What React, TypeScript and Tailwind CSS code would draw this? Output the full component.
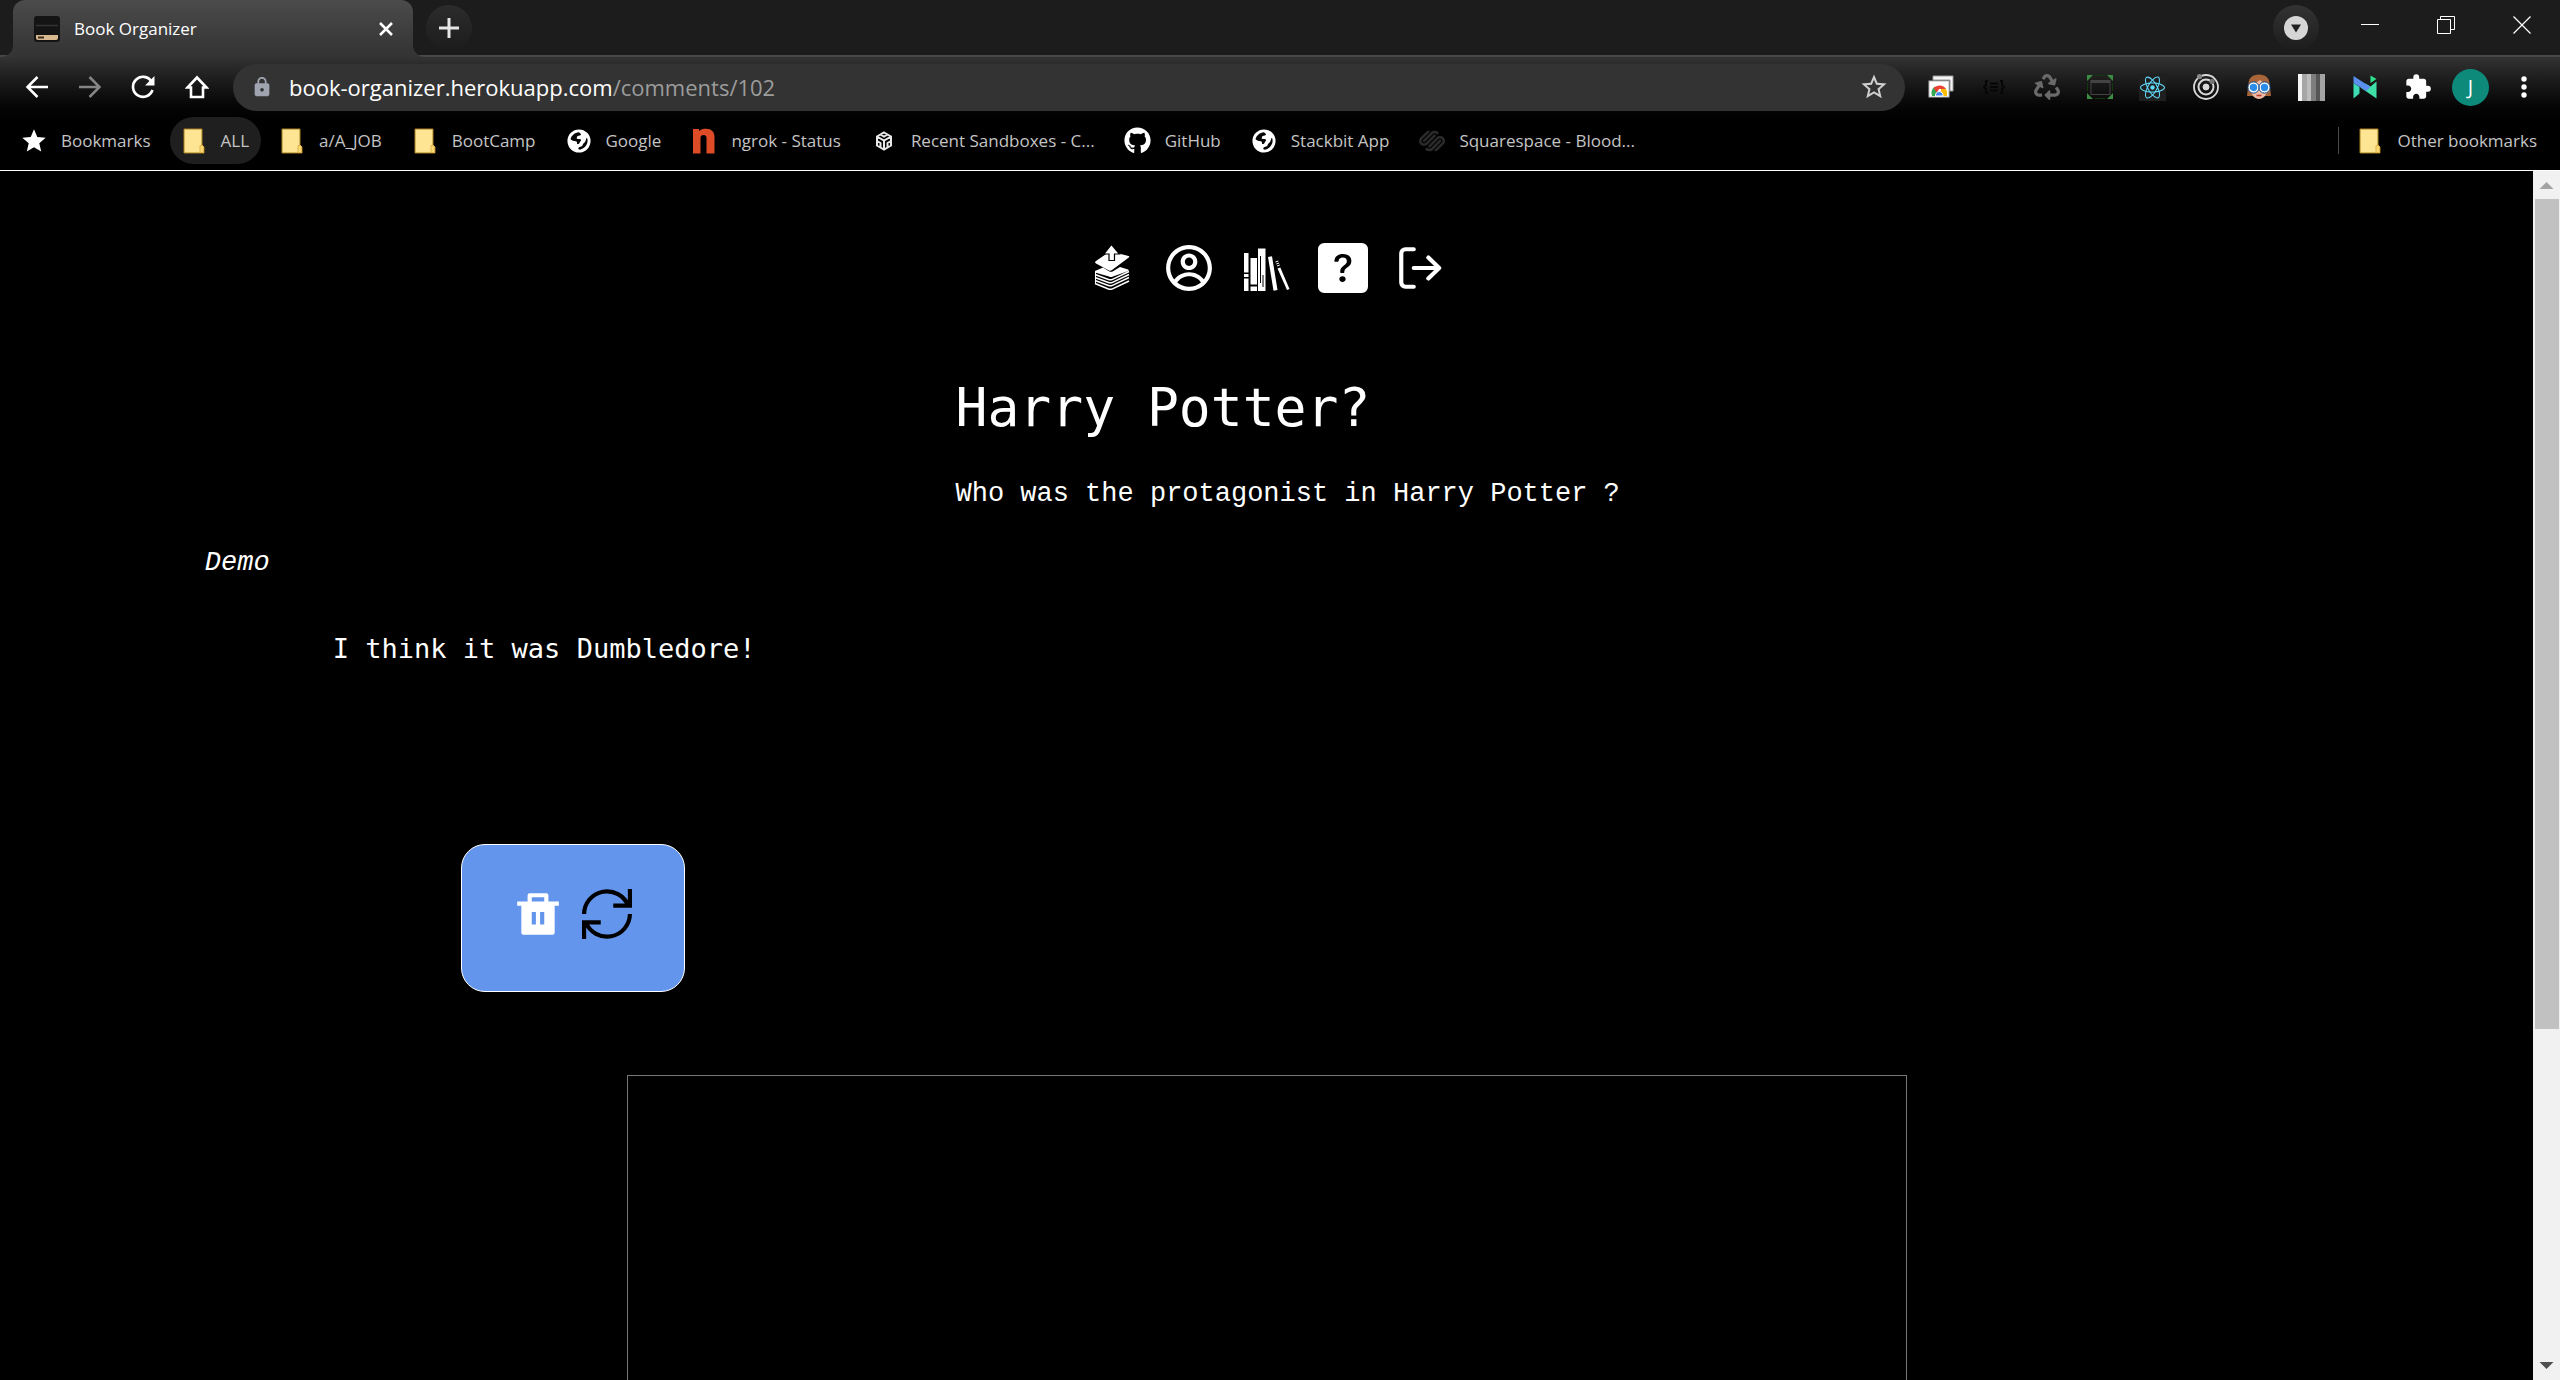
import type { ReactNode } from "react";
import { BsQuestionSquareFill } from "react-icons/bs";
import { CgProfile } from "react-icons/cg";
import { FaGithub, FaReact, FaRecycle } from "react-icons/fa";
import { MdExtension, MdLock, MdStar, MdStarBorder } from "react-icons/md";
import { SiSquarespace } from "react-icons/si";

/* ---------- browser icons ---------- */

const Folder = () => (
  <svg width="22" height="26" viewBox="0 0 22 26">
    <path d="M1 1h18v16l2 2v6H1z" fill="#fde594" stroke="#a87f22" strokeWidth="1" />
    <path d="M17 17.500h2.500l1 1.500v5.500H17z" fill="#fbd873" stroke="#e0b44b" strokeWidth="1" />
  </svg>
);

const Globe = () => (
  <svg width="26" height="26" viewBox="0 0 26 26">
    <circle cx="13" cy="13" r="12.500" fill="#fff" />
    <path
      d="M13 3.500c-4.500.3-8.200 3.400-9.200 7.700 1.600 1.300 3.200 2 5.600 2.200 1.400.1 1.500 1.200 1.500 2.800 1.600.3 2.700-.2 3-1.800.3-1.300 1.500-1.200 1.300-2.500-.3-1.500-2.700-1-4.600-1.400 0-2 .4-3.200 2.200-3.300 1.600-.1 2.400-.6 2.300-1.900zM21.600 9.500c.9 1.500 1 4.400.2 6.300-1.300 3.500-4.300 6-7.800 6.600-2.200-.3-2.300-1.800-.9-2.600 1.500-.8 3.700-.8 4-2.700.3-1.700 1.800-2 2.600-3.300.7-1.200.7-3.300 1.900-4.300z"
      fill="#060606"
    />
  </svg>
);

const Ngrok = () => (
  <svg width="24" height="26" viewBox="0 0 24 26">
    <path d="M1 1h6v2c2-1.800 4-2.300 7-2.300 5.500 0 8.500 3 8.500 8.300v16.500h-8V10c0-2-1-3-3-3s-3 1-3 3v15.500H1z" fill="#dd4b27" />
  </svg>
);

const Sandbox = () => (
  <svg width="18" height="20" viewBox="0 0 18 20" fill="none" stroke="#e8e8e8" strokeWidth="2">
    <path d="M9 1.500l7 4v9l-7 4-7-4v-9zM2 5.500l7 4 7-4M9 9.500v9M5.500 3.500L9 5.500l3.500-2M2 10l3.500 2v4M16 10l-3.500 2v4" />
  </svg>
);

const Back = () => (
  <svg width="24" height="24" viewBox="0 0 24 24" fill="none" stroke="currentColor" strokeWidth="2.500">
    <path d="M23 12H3M12.500 2L2.500 12l10 10" />
  </svg>
);

const Forward = () => (
  <svg width="24" height="24" viewBox="0 0 24 24" fill="none" stroke="currentColor" strokeWidth="2.500">
    <path d="M1 12h20M11.500 2l10 10-10 10" />
  </svg>
);

const Reload = () => (
  <svg width="24" height="24" viewBox="0 0 24 24" fill="none" stroke="currentColor" strokeWidth="2.600">
    <path d="M20.500 6.500A10 10 0 1 0 21.500 15" />
    <path d="M23.500 1v9.500H14z" fill="currentColor" stroke="none" />
  </svg>
);

const Home = () => (
  <svg width="24" height="24" viewBox="0 0 24 24" fill="none" stroke="currentColor" strokeWidth="2.600">
    <path d="M12 2.500L2.500 12.500H6v9.500h12v-9.500h3.500z" />
  </svg>
);

const PageStack = () => (
  <svg width="26" height="24" viewBox="0 0 26 24">
    <path d="M5 1h20v15h-3V5H5z" fill="#f4f4f4" stroke="#9a9a9a" />
    <rect x="1" y="6" width="20" height="16" fill="#fff" stroke="#b5b5b5" />
    <path d="M4 21a7.500 7.500 0 0 1 3-9.500l3 6V21z" fill="#34a853" />
    <path d="M5.500 13A8 8 0 0 1 18 14h-7l-2 4z" fill="#ea4335" />
    <path d="M18 14a8 8 0 0 1 1 7h-6v-7z" fill="#fbbc05" />
    <path d="M7.500 21a3.800 3.800 0 1 1 7.500 0z" fill="#4285f4" stroke="#fff" />
  </svg>
);

const JsonBraces = () => (
  <svg width="22" height="16" viewBox="0 0 22 16" fill="none" stroke="#060606" strokeWidth="2">
    <path d="M5 2H3v4L1 8l2 2v4h2M17 2h2v4l2 2-2 2v4h-2M7 4.500h8M7 8h8M7 11.500h8" />
  </svg>
);

const Screenshot = () => (
  <svg width="28" height="26" viewBox="0 0 28 26">
    <path d="M1 1h6L1 7zM27 1v6l-6-6zM1 25v-6l6 6zM27 25h-6l6-6z" fill="#3d8b40" />
    <path d="M9 1.500h10M9 24.500h10M1.500 9v8M26.500 9v8" stroke="#12380f" strokeWidth="1" />
    <rect x="5" y="6.500" width="19" height="14" fill="none" stroke="#444" strokeWidth="1" />
    <path d="M5 8h19" stroke="#444" strokeWidth="2" />
  </svg>
);

const Orbit = () => (
  <svg width="28" height="28" viewBox="0 0 28 28" fill="none" stroke="#d9d9d9">
    <circle cx="14" cy="14" r="12" strokeWidth="1.800" />
    <circle cx="14" cy="14" r="7.500" strokeWidth="2" />
    <circle cx="14" cy="14" r="3" fill="#d9d9d9" />
    <circle cx="7.500" cy="3.500" r="2.600" fill="#888" stroke="none" />
    <circle cx="20" cy="8.500" r="2.600" fill="#777" stroke="none" />
  </svg>
);

const Face = () => (
  <svg width="26" height="26" viewBox="0 0 26 26">
    <path d="M13 .5C6.500.5 3 4 2.500 9L1 22h7l5-3 5 3h7L23.500 9C23 4 19.500.5 13 .5z" fill="#a9653a" />
    <path d="M5 10c4-1 7-2 9-4 2 2 5 3 7 4v6c0 5-4 9-8 9s-8-4-8-9z" fill="#f2b9a2" />
    <circle cx="7.500" cy="13.500" r="4.600" fill="#2a8be8" stroke="#fff" strokeWidth="1.800" />
    <circle cx="18.500" cy="13.500" r="4.600" fill="#2a8be8" stroke="#fff" strokeWidth="1.800" />
    <circle cx="7.500" cy="13.500" r="5.600" fill="none" stroke="#164c8c" />
    <circle cx="18.500" cy="13.500" r="5.600" fill="none" stroke="#164c8c" />
    <path d="M10.500 21.500h5" stroke="#b23a3a" strokeWidth="1.600" />
  </svg>
);

const Stripes = () => (
  <svg width="27" height="27" viewBox="0 0 27 27">
    <path fill="#f5f5f5" d="M0 0h4v27H0z" />
    <path fill="#a6a6a6" d="M4 0h5v27H4z" />
    <path fill="#bdbdbd" d="M9 0h4v27H9z" />
    <path fill="#7d7d7d" d="M13 0h5v27h-5z" />
    <path fill="#555" d="M18 0h4v27h-4z" />
    <path fill="#a3a3a3" d="M22 0h5v27h-5z" />
  </svg>
);

const LetterMark = () => (
  <svg width="24" height="24" viewBox="0 0 24 24">
    <path d="M.5 8L6.500 12v6.500l-6 5z" fill="#3ddcb4" />
    <path d="M7.500 12.500l5-4 5 3 6-5v17z" fill="#3fe0a8" />
    <path d="M.5 1l17 11-4 4L.5 8z" fill="#5a8ff0" />
    <path d="M17.500 .5L23.500 4l-6 4z" fill="#2fe08f" />
  </svg>
);

const Dots = () => (
  <svg width="8" height="26" viewBox="0 0 8 26" fill="#fff">
    <circle cx="4" cy="5" r="2.700" />
    <circle cx="4" cy="13" r="2.700" />
    <circle cx="4" cy="21" r="2.700" />
  </svg>
);

/* ---------- page icons ---------- */

const BookUpload = () => (
  <svg width="50" height="50" viewBox="0 0 50 50">
    <path d="M9 18L22 9h4l15.500 4q1.500.5.3 1.500L25 27q-1.500 1.200-3 .5L9 20.500q-2-1.200 0-2.500z" fill="#fff" />
    <path d="M24.500 1.500l8 9.500H27.500v6.500h-5.500V11H17z" fill="#fff" stroke="#000" strokeWidth="1.200" />
    <path d="M8 29.500V28l8-3.500 6 3.700q2 1 4 0l7-4.200 8 2.500q1.500.7.3 1.500L26 33.500q-2 1-4 0z" fill="#fff" />
    <g fill="none" stroke="#fff" strokeWidth="1.500">
      <path d="M8 31.500l13.500 5q2 .8 4-.2L42 28.500" />
      <path d="M8 34.500l13.500 5q2 .8 4-.2L42 31.500" />
      <path d="M8 37.500l13.500 5q2 .8 4-.2L42 34.500" />
      <path d="M8 40.500l13.500 5.500q2 .8 4-.2L42 38" />
    </g>
    <path d="M8.500 29v12" stroke="#fff" strokeWidth="1" />
  </svg>
);

const Bookshelf = () => (
  <svg width="50" height="50" viewBox="0 0 50 50" fill="#fff">
    <path d="M3 10h4.500v19.500H3zM3 31h4.500v3H3zM3 35.500h4.500V48H3z" />
    <path d="M9.500 15h6.500v26.500H9.500zM9.500 43.500h6.500V48H9.500z" />
    <path d="M17 5.500h7.500V48H17z" />
    <path d="M19.500 13v27M22 32v12" stroke="#000" strokeWidth="1" />
    <path d="M27 14l4-.7L36.500 47l-4 .8z" />
    <path d="M36.500 25.500l2.800-1L48.500 46l-2.500 1z" />
    <path d="M34.500 19l2.800-1M35.300 21l2.800-1M36 23l2.800-1" stroke="#fff" strokeWidth="1" />
  </svg>
);

const LogOutIcon = () => (
  <svg width="50" height="50" viewBox="0 0 24 24" fill="none" stroke="#fff" strokeWidth="2" strokeLinecap="round" strokeLinejoin="round">
    <path d="M9 3H5a2 2 0 0 0-2 2v14a2 2 0 0 0 2 2h4M9 12h12M16 7l5.200 5-5.200 5" />
  </svg>
);

const Trash = () => (
  <svg width="50" height="50" viewBox="0 0 24 24" fill="#fff">
    <path d="M17 6h5v2h-2v13a1 1 0 0 1-1 1H5a1 1 0 0 1-1-1V8H2V6h5V3a1 1 0 0 1 1-1h8a1 1 0 0 1 1 1zm-8 5v6h2v-6zm4 0v6h2v-6zM9 4v2h6V4z" />
  </svg>
);

const Cycle = () => (
  <svg width="50" height="50" viewBox="0 0 24 24" fill="none" stroke="#000" strokeWidth="2">
    <path d="M1 12A11 11 0 0 1 22.200 8M23 12A11 11 0 0 1 1.800 16M23 0v8h-8M1 24v-8h8" />
  </svg>
);

/* ---------- browser chrome ---------- */

function TabStrip() {
  return (
    <div className="flex h-[55px] items-start bg-[#1c1c1c]">
      <div className="relative ml-[13px] flex h-[57px] w-[400px] shrink-0 items-center rounded-t-[12px] bg-linear-to-b from-[#4b4b4b] to-[#333333] pr-[18px] pl-[21px]">
        <svg className="absolute bottom-0 -left-3" width="12" height="12" viewBox="0 0 12 12">
          <path d="M12 0v12H0A12 12 0 0 0 12 0z" fill="#353535" />
        </svg>
        <svg className="absolute -right-3 bottom-0" width="12" height="12" viewBox="0 0 12 12">
          <path d="M0 0v12h12A12 12 0 0 1 0 0z" fill="#353535" />
        </svg>
        <svg width="26" height="26" viewBox="0 0 26 26">
          <rect width="26" height="26" rx="3" fill="#141414" />
          <path d="M2 9.500h22" stroke="#333" strokeWidth="1.500" />
          <path d="M2 19h22v3q0 2-2 2H4q-2 0-2-2z" fill="#d8b98f" />
          <path d="M4 21.500h6" stroke="#3a2a1a" strokeWidth="2" />
        </svg>
        <span className="ml-[14px] grow text-[17px] text-white">Book Organizer</span>
        <button aria-label="Close tab" className="text-white">
          <svg width="18" height="18" viewBox="0 0 18 18" stroke="currentColor" strokeWidth="2.500">
            <path d="M3 3l12 12M15 3L3 15" />
          </svg>
        </button>
      </div>
      <button aria-label="New tab" className="mt-[5px] ml-[13px] flex size-[46px] items-center justify-center rounded-full bg-linear-to-b from-[#2c2c2c] to-[#1c1c1c]">
        <svg width="20" height="20" viewBox="0 0 20 20" stroke="#e6e6e6" strokeWidth="3">
          <path d="M10 0v20M0 10h20" />
        </svg>
      </button>
      <div className="grow" />
      <button aria-label="Search tabs" className="mt-[5px] mr-[13px] flex size-[46px] items-center justify-center rounded-full bg-linear-to-b from-[#333333] to-[#1c1c1c]">
        <svg width="24" height="24" viewBox="0 0 24 24">
          <circle cx="12" cy="12" r="12" fill="#d6d6d6" />
          <path d="M7 8.500h10l-5 8z" fill="#222" />
        </svg>
      </button>
      <button aria-label="Minimize" className="flex h-[49px] w-[76px] items-center justify-center">
        <svg width="18" height="18" viewBox="0 0 18 18" stroke="#fff">
          <path d="M0 8.500h18" />
        </svg>
      </button>
      <button aria-label="Restore" className="flex h-[49px] w-[76px] items-center justify-center">
        <svg width="18" height="18" viewBox="0 0 18 18" fill="none" stroke="#fff">
          <path d="M.5 3.500h13v14H.5zM3.500 3.500v-3h14v13h-4" />
        </svg>
      </button>
      <button aria-label="Close" className="flex h-[49px] w-[76px] items-center justify-center">
        <svg width="18" height="18" viewBox="0 0 18 18" stroke="#fff" strokeWidth="1.200">
          <path d="M.5.5l17 17M17.500.5l-17 17" />
        </svg>
      </button>
    </div>
  );
}

const extensions: { name: string; icon: ReactNode }[] = [
  { name: "Page stack", icon: <PageStack /> },
  { name: "JSON viewer", icon: <JsonBraces /> },
  { name: "Recycle", icon: <FaRecycle className="size-[26px] text-[#6a6a6a]" /> },
  { name: "Screen capture", icon: <Screenshot /> },
  {
    name: "React tools",
    icon: (
      <span className="flex size-[27px] items-center justify-center bg-[#1f1f1f]">
        <FaReact className="size-[25px] text-[#61dafb]" />
      </span>
    ),
  },
  { name: "Orbit", icon: <Orbit /> },
  { name: "Goggles", icon: <Face /> },
  { name: "Grayscale", icon: <Stripes /> },
  { name: "Notes", icon: <LetterMark /> },
  { name: "Extensions", icon: <MdExtension className="size-[28px] text-white" /> },
  {
    name: "Profile",
    icon: (
      <span className="flex size-[37px] items-center justify-center rounded-full bg-[#0d8a7a] text-[20px] text-white">J</span>
    ),
  },
  { name: "Menu", icon: <Dots /> },
];

function Toolbar() {
  return (
    <div className="flex h-[60px] items-center pl-[10px] text-white">
      <button aria-label="Back" className="flex w-[53px] justify-center"><Back /></button>
      <button aria-label="Forward" className="flex w-[53px] justify-center text-[#858585]"><Forward /></button>
      <button aria-label="Reload" className="flex w-[54px] justify-center"><Reload /></button>
      <button aria-label="Home" className="flex w-[53px] justify-center"><Home /></button>
      <div className="ml-[10px] flex h-[47px] grow items-center rounded-full bg-[#333333] pr-[16px] pl-[18px]">
        <MdLock className="size-[22px] text-[#a0a3b0]" />
        <a href="#page" className="ml-[16px] grow text-[22px] text-[#9c9c9c]">
          <span className="text-white">book-organizer.herokuapp.com</span>/comments/102
        </a>
        <button aria-label="Bookmark this page"><MdStarBorder className="size-[30px] text-[#cfcfcf]" /></button>
      </div>
      <div className="mr-[10px] ml-[9px] flex">
        {extensions.map((e) => (
          <button key={e.name} aria-label={e.name} className="flex h-[37px] w-[53px] items-center justify-center">
            {e.icon}
          </button>
        ))}
      </div>
    </div>
  );
}

const bookmarks: { label: string; icon: ReactNode; active?: boolean }[] = [
  { label: "Bookmarks", icon: <MdStar className="size-[28px] shrink-0 text-white" /> },
  { label: "ALL", icon: <Folder />, active: true },
  { label: "a/A_JOB", icon: <Folder /> },
  { label: "BootCamp", icon: <Folder /> },
  { label: "Google", icon: <Globe /> },
  { label: "ngrok - Status", icon: <Ngrok /> },
  { label: "Recent Sandboxes - C...", icon: <Sandbox /> },
  { label: "GitHub", icon: <FaGithub className="size-[27px] shrink-0 text-white" /> },
  { label: "Stackbit App", icon: <Globe /> },
  { label: "Squarespace - Blood...", icon: <SiSquarespace className="size-[26px] shrink-0 text-[#2b2b2b]" /> },
];

function BookmarkBar() {
  return (
    <div className="flex items-center gap-[7px] pb-[6px] pl-[10px] text-[17px] text-[#c4c4c4]">
      {bookmarks.map((b) => (
        <a
          key={b.label}
          href="#page"
          className={"flex h-[47px] items-center gap-[15px] rounded-full px-[12px] whitespace-nowrap " + (b.active ? "bg-[#1f1f1f]" : "")}
        >
          <span className="flex w-6 justify-center">{b.icon}</span>
          {b.label}
        </a>
      ))}
      <div className="grow" />
      <div className="h-[27px] w-px bg-[#4a4a4a]" />
      <a href="#page" className="flex items-center gap-[15px] pr-[23px] pl-[12px] whitespace-nowrap">
        <span className="flex w-6 justify-center"><Folder /></span>
        Other bookmarks
      </a>
    </div>
  );
}

function Scrollbar() {
  return (
    <div aria-hidden="true" className="flex w-[27px] shrink-0 flex-col items-center bg-[#f1f1f1]">
      <svg width="27" height="28" viewBox="0 0 27 28"><path d="M6.500 18l7-7 7 7z" fill="#a3a3a3" /></svg>
      <div className="flex w-[24px] grow flex-col">
        <div className="h-[72%] bg-[#c1c1c1]" />
      </div>
      <svg width="27" height="28" viewBox="0 0 27 28"><path d="M6.500 10l7 7 7-7z" fill="#505050" /></svg>
    </div>
  );
}

/* ---------- page ---------- */

const navItems: { name: string; icon: ReactNode }[] = [
  { name: "Add book", icon: <BookUpload /> },
  { name: "Profile", icon: <CgProfile className="size-[50px]" /> },
  { name: "Library", icon: <Bookshelf /> },
  { name: "Questions", icon: <BsQuestionSquareFill className="size-[50px]" /> },
  { name: "Log out", icon: <LogOutIcon /> },
];

function CommentPage() {
  return (
    <main id="page" className="grow overflow-hidden bg-black pt-[72px] font-['DejaVu_Sans_Mono',monospace] text-[27px] leading-9 text-white">
      <nav className="flex justify-center gap-[27px] pr-[2px]">
        {navItems.map((n) => (
          <a key={n.name} href="#page" aria-label={n.name}>{n.icon}</a>
        ))}
      </nav>
      <header className="mx-auto mt-[80px] w-[622px] whitespace-nowrap">
        <h1 className="text-[53px] leading-[70px]">Harry Potter?</h1>
        <p className="mt-[33px] font-['Liberation_Mono',monospace]">Who was the protagonist in Harry Potter ?</p>
      </header>
      <article>
        <p className="mt-[33px] ml-[8vw] font-['Liberation_Mono',monospace] italic">Demo</p>
        <p className="mt-[50px] ml-[13vw]">I think it was Dumbledore!</p>
        <div className="mt-[177px] ml-[18vw] flex w-fit gap-[19px] rounded-[24px] border border-white bg-[#6495ed] pt-[44px] pr-[52px] pb-[52px] pl-[51px]">
          <button aria-label="Delete comment"><Trash /></button>
          <button aria-label="Update comment"><Cycle /></button>
        </div>
      </article>
      <textarea aria-label="New comment" className="mx-auto mt-[83px] block h-[600px] w-[50vw] resize-none border border-[#767676] bg-black p-2 outline-none" />
    </main>
  );
}

export default function App() {
  return (
    <div className="flex h-screen flex-col overflow-hidden bg-black font-['Open_Sans',sans-serif]">
      <div className="border-b border-white">
        <TabStrip />
        <div className="border-t-2 border-[#484848] bg-linear-to-b from-[#333333] to-black to-70%">
          <Toolbar />
          <BookmarkBar />
        </div>
      </div>
      <div className="flex min-h-0 grow">
        <CommentPage />
        <Scrollbar />
      </div>
    </div>
  );
}
